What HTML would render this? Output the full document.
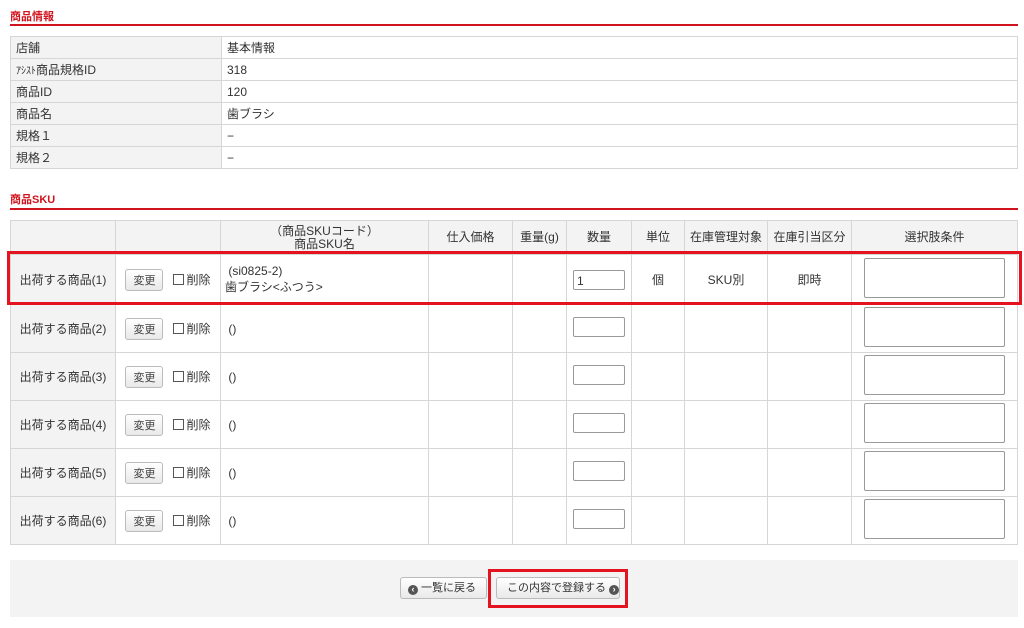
<!DOCTYPE html>
<html><head><meta charset="utf-8"><style>
body{margin:0;background:#fff;font-family:"Liberation Sans","Noto Sans CJK JP",sans-serif;font-size:12px;color:#333;position:relative;width:1024px;height:628px;overflow:hidden}
.h{position:absolute;left:10px;color:#d0131c;font-weight:bold;font-size:11px}
.line{position:absolute;left:10px;width:1008px;height:2px;background:#d0131c}
table{position:absolute;border-collapse:collapse;table-layout:fixed}
td,th{border:1px solid #d6d6d6;padding:0 4px;font-weight:normal}
.info{left:10px;top:36px;width:1008px}
.info td{height:21px;padding:0 5px}
.info td:first-child{background:#f3f3f3}
.sku{left:10px;top:220px;width:1008px}
.sku th{background:#f3f3f3;height:33px;text-align:center;line-height:13px}
.sku td{height:47px;text-align:center}
.sku td.l{background:#f3f3f3}
.sku td.n{text-align:left}
.btn{display:inline-block;border:1px solid #bbb;border-radius:3px;background:linear-gradient(#fff,#e8e8e8);font-size:11px;padding:2px 7px;color:#444}
.cb{display:inline-block;width:9px;height:9px;border:1px solid #555;vertical-align:-1px;margin:0 2px 0 10px;background:#fff}
.q{display:inline-block;height:20px;border:1px solid #999;border-radius:2px;text-align:left;line-height:20px;padding-left:3px;box-sizing:border-box;width:52px}
.ta{display:inline-block;width:139px;height:38px;border:1px solid #999;border-radius:2px}
.red{position:absolute;border:3px solid #e3141f}
.foot{position:absolute;left:10px;top:560px;width:1008px;height:57px;background:#f3f3f3}
.fb{position:absolute;top:577px;height:22px;border:1px solid #bbb;border-radius:3px;background:linear-gradient(#fff,#e9e9e9);font-size:11px;color:#333;line-height:20px;box-sizing:border-box;white-space:nowrap}
.ic{display:inline-block;width:10px;height:10px;border-radius:50%;background:#555;color:#fff;font-size:9px;line-height:9px;text-align:center;vertical-align:-1px;font-weight:bold}
</style></head><body>
<div class="h" style="top:8px">商品情報</div>
<div class="line" style="top:24px"></div>
<table class="info">
<col style="width:211px"><col>
<tr><td>店舗</td><td>基本情報</td></tr>
<tr><td><span style="font-size:10px">ｱｼｽﾄ</span>商品規格ID</td><td>318</td></tr>
<tr><td>商品ID</td><td>120</td></tr>
<tr><td>商品名</td><td>歯ブラシ</td></tr>
<tr><td>規格１</td><td>−</td></tr>
<tr><td>規格２</td><td>−</td></tr>
</table>
<div class="h" style="top:191px">商品SKU</div>
<div class="line" style="top:208px"></div>
<table class="sku">
<col style="width:105px"><col style="width:105px"><col style="width:208px"><col style="width:84px"><col style="width:54px"><col style="width:65px"><col style="width:53px"><col style="width:83px"><col style="width:84px"><col>
<tr><th></th><th></th><th>（商品SKUコード）<br>商品SKU名</th><th>仕入価格</th><th>重量(g)</th><th>数量</th><th>単位</th><th>在庫管理対象</th><th>在庫引当区分</th><th>選択肢条件</th></tr>
<tr><td class="l" style="height:49px">出荷する商品(1)</td><td><span class="btn">変更</span><span class="cb"></span>削除</td><td class="n">&nbsp;(si0825-2)<br>歯ブラシ&lt;ふつう&gt;</td><td></td><td></td><td><span class="q">1</span></td><td>個</td><td>SKU別</td><td>即時</td><td><span class="ta"></span></td></tr>
<tr><td class="l">出荷する商品(2)</td><td><span class="btn">変更</span><span class="cb"></span>削除</td><td class="n">&nbsp;()</td><td></td><td></td><td><span class="q"></span></td><td></td><td></td><td></td><td><span class="ta"></span></td></tr>
<tr><td class="l">出荷する商品(3)</td><td><span class="btn">変更</span><span class="cb"></span>削除</td><td class="n">&nbsp;()</td><td></td><td></td><td><span class="q"></span></td><td></td><td></td><td></td><td><span class="ta"></span></td></tr>
<tr><td class="l">出荷する商品(4)</td><td><span class="btn">変更</span><span class="cb"></span>削除</td><td class="n">&nbsp;()</td><td></td><td></td><td><span class="q"></span></td><td></td><td></td><td></td><td><span class="ta"></span></td></tr>
<tr><td class="l">出荷する商品(5)</td><td><span class="btn">変更</span><span class="cb"></span>削除</td><td class="n">&nbsp;()</td><td></td><td></td><td><span class="q"></span></td><td></td><td></td><td></td><td><span class="ta"></span></td></tr>
<tr><td class="l">出荷する商品(6)</td><td><span class="btn">変更</span><span class="cb"></span>削除</td><td class="n">&nbsp;()</td><td></td><td></td><td><span class="q"></span></td><td></td><td></td><td></td><td><span class="ta"></span></td></tr>
</table>
<div class="red" style="left:7px;top:251px;width:1009px;height:48px"></div>
<div class="foot"></div>
<div class="fb" style="left:400px;width:87px;padding-left:7px"><span class="ic">&lsaquo;</span> 一覧に戻る</div>
<div class="fb" style="left:496px;width:124px;padding-left:10px">この内容で登録する <span class="ic">&rsaquo;</span></div>
<div class="red" style="left:488px;top:569px;width:134px;height:33px"></div>
</body></html>
